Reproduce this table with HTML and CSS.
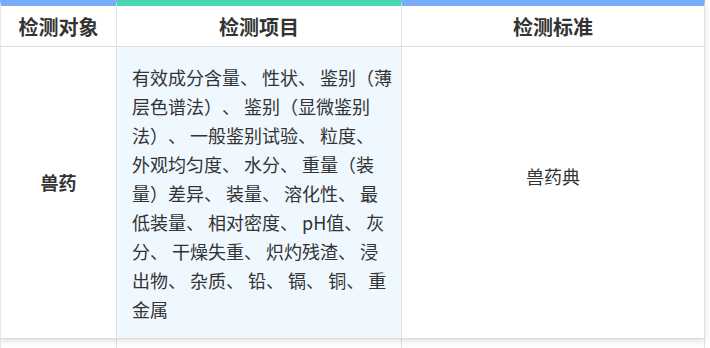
FILE: index.html
```html
<!DOCTYPE html>
<html lang="zh-CN">
<head>
    <meta charset="UTF-8">
    <meta name="viewport" content="width=device-width, initial-scale=1.0">
    <title>检测范围</title>
    <link rel="stylesheet" href="styles.css">
</head>
<body>
    <div class="scope-card">
        <div class="scope-table">
            <div class="cell head bar-blue">检测对象</div>
            <div class="cell head bar-green">检测项目</div>
            <div class="cell head bar-blue">检测标准</div>

            <div class="cell target">兽药</div>
            <div class="cell items">有效成分含量、 性状、 鉴别（薄层色谱法）、 鉴别（显微鉴别法）、 一般鉴别试验、 粒度、<br>外观均匀度、 水分、 重量（装量）差异、 装量、 溶化性、 最低装量、 相对密度、 pH值、 灰分、 干燥失重、 炽灼残渣、 浸出物、 杂质、 铅、 镉、 铜、 重金属</div>
            <div class="cell standard">兽药典</div>
        </div>
    </div>
    <!-- next card, cut off by the window -->
    <div class="scope-table next">
        <div class="cell"></div>
        <div class="cell items"></div>
        <div class="cell"></div>
    </div>
</body>
</html>
```

FILE: styles.css
```css
body {
    margin: 0;
    font-family: "Noto Sans CJK SC", "Noto Sans", sans-serif;
    color: #333;
    background-color: #fff;
}
.scope-card {
    position: relative;
    z-index: 1;
    width: 705px;
    background-color: #fff;
    box-shadow: 0 2px 6px rgba(0, 0, 0, 0.13);
}
.scope-table {
    display: grid;
    grid-template-columns: 117px 285px 1fr;
    width: 705px;
}
.cell {
    border-right: 1px solid #e2e2e2;
    border-bottom: 1px solid #dcdcdc;
    box-sizing: border-box;
}
.scope-table .cell:nth-child(3n+1) {
    border-left: 1px solid #e8e8e8;
}
.head {
    height: 47px;
    display: flex;
    align-items: center;
    justify-content: center;
    font-size: 20px;
    font-weight: bold;
    color: #333;
}
.bar-blue {
    border-top: 6px solid #78acfb;
}
.bar-green {
    border-top: 6px solid #49d6b2;
}
.target, .standard {
    display: flex;
    align-items: center;
    justify-content: center;
    font-size: 18px;
}
.target {
    font-weight: bold;
    padding-bottom: 22px;
}
.standard {
    padding-bottom: 34px;
}
.items {
    background-color: #eff8ff;
    font-size: 18px;
    line-height: 29px;
    padding: 16px 8px 14px 15px;
    text-spacing-trim: space-all;
}
.next {
    height: 20px;
}
.next .cell {
    border-bottom: none;
}
.next .items {
    background-color: transparent;
    padding: 0;
}
```
